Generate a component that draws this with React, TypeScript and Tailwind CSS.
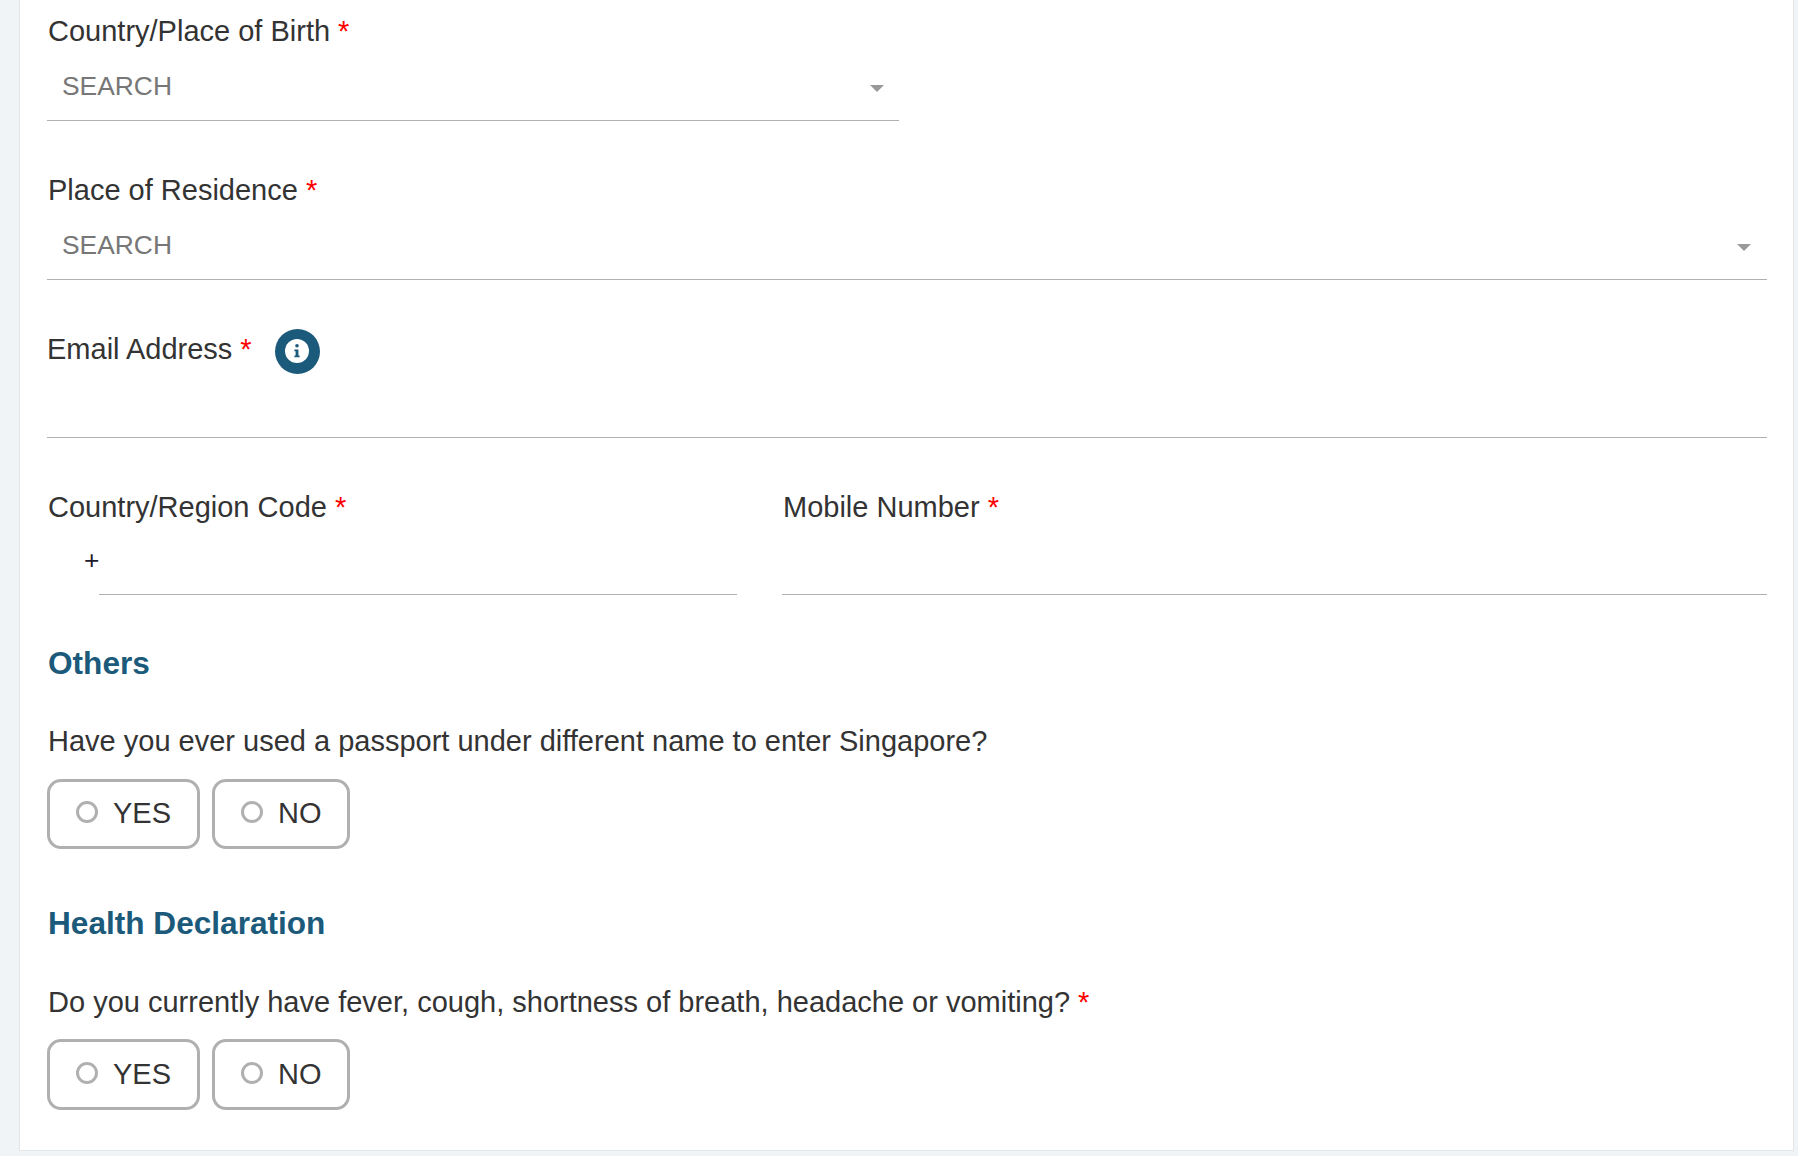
const Label = ({ children, className = "" }: { children: React.ReactNode; className?: string }) => (
  <div className={`h-[24px] leading-[24px] text-[29px] ${className}`}>
    <span className="text-[#333333]">{children}</span>
  </div>
);

const Req = () => <span className="text-[#ff0000] ml-[8px]">*</span>;

const SearchSelect = ({ className = "", caretClass }: { className?: string; caretClass: string }) => (
  <div className={`relative h-[78px] border-b border-[#b0b0b0] pl-[15px] pt-[28px] ${className}`}>
    <span className="block text-[26.4px] leading-[30px] text-[#777777]">SEARCH</span>
    <svg className={`absolute top-[42px] ${caretClass}`} width="14" height="7" viewBox="0 0 14 7">
      <path d="M0 0H14L7 7Z" fill="#999999" />
    </svg>
  </div>
);

const Radio = ({ label, className }: { label: string; className: string }) => (
  <div className={`border-[3px] border-[#b0b0b0] rounded-[14px] flex items-center ${className}`}>
    <span className="w-[22px] h-[22px] rounded-full border-[3px] border-[#b0b0b0] bg-white -mt-[4px]" />
    <span className="text-[29px] text-[#333333] ml-[15px]">{label}</span>
  </div>
);

export default function App() {
  return (
    <div
      className="w-full h-[1156px] bg-[#f0f4f7] pl-[19px] pr-[4px] pb-[5px] overflow-hidden"
      style={{ fontFamily: '"Liberation Sans", Arial, sans-serif' }}
    >
      <div className="h-full bg-white border-x border-b border-[#e4e7e9] pl-[27px] pr-[26px] pt-[19px]">
        <Label className="pl-px">Country/Place of Birth<Req /></Label>
        <SearchSelect className="w-[852px]" caretClass="right-[15px]" />

        <Label className="pl-px mt-[57px]">Place of Residence<Req /></Label>
        <SearchSelect className="h-[77px]" caretClass="right-[16px]" />

        <div className="flex items-center h-[24px] mt-[57px]">
          <Label>Email Address<Req /></Label>
          <span className="ml-[23px] mt-[4px] w-[45px] h-[45px] rounded-full bg-[#1b5a7a] flex items-center justify-center shrink-0">
            <svg width="24" height="24" viewBox="0 0 24 24">
              <circle cx="12" cy="12" r="12" fill="#ffffff" />
              <circle cx="12" cy="6.8" r="1.8" fill="#1b5a7a" />
              <path d="M9.4 10.4H13.4V16.4H14.6V18.2H9.4V16.4H10.6V12.2H9.4Z" fill="#1b5a7a" />
            </svg>
          </span>
        </div>
        <div className="h-[77px] border-b border-[#b0b0b0]" />

        <div className="flex mt-[57px] gap-[45px]">
          <div className="w-[690px] shrink-0">
            <Label className="pl-px">Country/Region Code<Req /></Label>
            <div className="flex h-[76px]">
              <span className="w-[52px] pl-[37px] pt-[27px] text-[26.4px] leading-[28px] text-[#1a1a2a]">+</span>
              <div className="flex-1 border-b border-[#b0b0b0]" />
            </div>
          </div>
          <div className="flex-1">
            <Label className="pl-px">Mobile Number<Req /></Label>
            <div className="h-[76px] border-b border-[#b0b0b0]" />
          </div>
        </div>

        <h2 className="mt-[54px] pl-px h-[28px] leading-[28px] text-[31.6px] font-bold text-[#1b5a7a]">Others</h2>
        <div className="mt-[50px] pl-px h-[28px] leading-[28px] text-[29px] text-[#333333]">
          Have you ever used a passport under different name to enter Singapore?
        </div>
        <div className="mt-[24px] flex gap-[12px]">
          <Radio label="YES" className="h-[70px] w-[153px] pl-[26px]" />
          <Radio label="NO" className="h-[70px] w-[138px] pl-[26px]" />
        </div>

        <h2 className="mt-[60px] pl-px h-[28px] leading-[28px] text-[31.6px] font-bold text-[#1b5a7a]">Health Declaration</h2>
        <div className="mt-[51px] pl-px h-[28px] leading-[28px] text-[29px] text-[#333333]">
          Do you currently have fever, cough, shortness of breath, headache or vomiting?<Req />
        </div>
        <div className="mt-[23px] flex gap-[12px]">
          <Radio label="YES" className="h-[71px] w-[153px] pl-[26px]" />
          <Radio label="NO" className="h-[71px] w-[138px] pl-[26px]" />
        </div>
      </div>
    </div>
  );
}
